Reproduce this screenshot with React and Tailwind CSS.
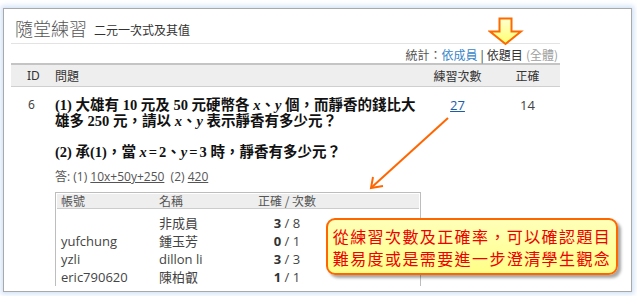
import React from "react";

const cjk = "font-['Noto_Sans_CJK_TC','Noto_Sans',sans-serif]";

function Q({ children }) {
  return <i className="font-['Liberation_Serif',serif] italic">{children}</i>;
}

export default function App() {
  return (
    <div className={`relative w-[637px] h-[296px] bg-white overflow-hidden pt-[8px] pl-[3px] ${cjk}`}>
      <div className="w-[629px] h-[284px] border border-[#a9a9a9] bg-white shadow-[0_0_5px_2px_rgba(170,200,240,0.55)] overflow-hidden pl-[7px]">
        <div className="w-[549px]">
          {/* Title */}
          <div className="h-[35px] flex items-end pb-[5px] pl-[4px] border-b border-[#e3e3e3]">
            <span className="text-[18px] leading-[20px] text-[#555] font-light">隨堂練習</span>
            <span className="text-[12px] leading-[16px] text-[#333] ml-[7px]">二元一次式及其值</span>
          </div>
          {/* Stats */}
          <div className="h-[19px] flex items-end justify-end pr-[2px] text-[12px] leading-[16px] text-[#555]">
            <span>統計：</span>
            <span className="text-[#3a86c8]">依成員</span>
            <span className="text-[#333] mx-[3px]">|</span>
            <span className="text-[#333]">依題目</span>
            <span className="text-[#a0a0a0] ml-[3px]">(全體)</span>
          </div>
          {/* Header */}
          <div className="grid grid-cols-[44px_365px_75px_65px] h-[24px] items-center bg-[#eeeeee] border-t-2 border-t-[#c4c4c4] border-b border-b-[#cfcfcf] text-[12px] text-[#333]">
            <div className="pl-[16px] font-['Noto_Sans',sans-serif]">ID</div>
            <div>問題</div>
            <div className="text-center">練習次數</div>
            <div className="text-center">正確</div>
          </div>
          {/* Body row */}
          <div className="grid grid-cols-[44px_365px_75px_65px] pt-[10px]">
            <div className="pl-[17px] text-[12px] leading-[16px] text-[#444] font-['Noto_Sans',sans-serif]">6</div>
            <div className="min-w-0">
              <div className="font-['Liberation_Serif','Noto_Sans_CJK_TC',serif] font-bold text-[14.5px] leading-[16px] text-[#111] whitespace-nowrap">
                <p>
                  (1) 大雄有 10 元及 50 元硬幣各 <Q>x</Q>、<Q>y</Q> 個，而靜香的錢比大
                  <br />
                  雄多 250 元，請以 <Q>x</Q>、<Q>y</Q> 表示靜香有多少元？
                </p>
                <p className="mt-[15px]">
                  (2) 承(1)，當 <Q>x</Q><span className="mx-[2px]">=</span>2、<Q>y</Q><span className="mx-[2px]">=</span>3 時，靜香有多少元？
                </p>
              </div>
              <div className="mt-[9px] text-[12px] leading-[16px] text-[#555] font-['Open_Sans','Noto_Sans_CJK_TC',sans-serif]">
                答: (1) <span className="underline">10x+50y+250</span>&nbsp; (2) <span className="underline">420</span>
              </div>
              {/* Sub table */}
              <div className="mt-[7px] w-[366px] h-[94px] border-t border-x border-[#bdbdbd] pt-[1px] px-[1px] text-[13px] text-[#444]">
                <div className="grid grid-cols-[98px_96px_64px] h-[15px] items-center bg-[#eeeeee] border-b border-[#cccccc] text-[12px] leading-[14px] text-[#555] pl-[4px]">
                  <div>帳號</div>
                  <div>名稱</div>
                  <div className="text-center">正確 / 次數</div>
                </div>
                <div className="mt-[5px] pl-[4px] font-['Open_Sans','Noto_Sans_CJK_TC',sans-serif]">
                  {[
                    ["", "非成員", "3", "8"],
                    ["yufchung", "鍾玉芳", "0", "1"],
                    ["yzli", "dillon li", "3", "3"],
                    ["eric790620", "陳柏叡", "1", "1"],
                  ].map((r, i) => (
                    <div key={i} className="grid grid-cols-[98px_96px_64px] h-[18px] items-center leading-[18px]">
                      <div>{r[0]}</div>
                      <div>{r[1]}</div>
                      <div className="text-center">
                        <b className="text-[#333]">{r[2]}</b> / {r[3]}
                      </div>
                    </div>
                  ))}
                </div>
              </div>
            </div>
            <div className="text-center text-[13px] leading-[16px] font-['Open_Sans',sans-serif]">
              <span className="text-[#1a5ea8] underline">27</span>
            </div>
            <div className="text-center text-[13px] leading-[16px] text-[#444] font-['Open_Sans',sans-serif]">14</div>
          </div>
        </div>
      </div>

      {/* Yellow down arrow */}
      <svg className="absolute left-[488px] top-[17px]" width="36" height="29" viewBox="0 0 36 29">
        <defs>
          <linearGradient id="yg" x1="0" y1="0" x2="0" y2="1">
            <stop offset="0" stopColor="#ffffd0" />
            <stop offset="1" stopColor="#ffff70" />
          </linearGradient>
        </defs>
        <polygon
          points="11.5,1.5 23.5,1.5 23.5,14.5 33,14.5 17.5,27 2,14.5 11.5,14.5"
          fill="url(#yg)"
          stroke="#ff6a00"
          strokeWidth="2"
          strokeLinejoin="miter"
        />
      </svg>

      {/* Orange pointer arrow */}
      <svg className="absolute left-0 top-0" width="637" height="296">
        <line x1="448" y1="118" x2="372" y2="187" stroke="#ff6600" strokeWidth="2" />
        <polyline points="383,186 371,188 373,177" fill="none" stroke="#ff6600" strokeWidth="2" strokeLinejoin="miter" />
      </svg>

      {/* Callout */}
      <div className="absolute left-[326px] top-[218px] w-[292px] h-[57px] rounded-[9px] border-2 border-[#ff6600] bg-gradient-to-b from-[#ffffb8] to-[#ffff88] shadow-[3px_3px_3px_rgba(0,0,0,0.35)] flex flex-col items-center justify-center text-[16px] leading-[22px] tracking-[1.4px] text-[#ee0000]">
        <div>從練習次數及正確率，可以確認題目</div>
        <div>難易度或是需要進一步澄清學生觀念</div>
      </div>
    </div>
  );
}
